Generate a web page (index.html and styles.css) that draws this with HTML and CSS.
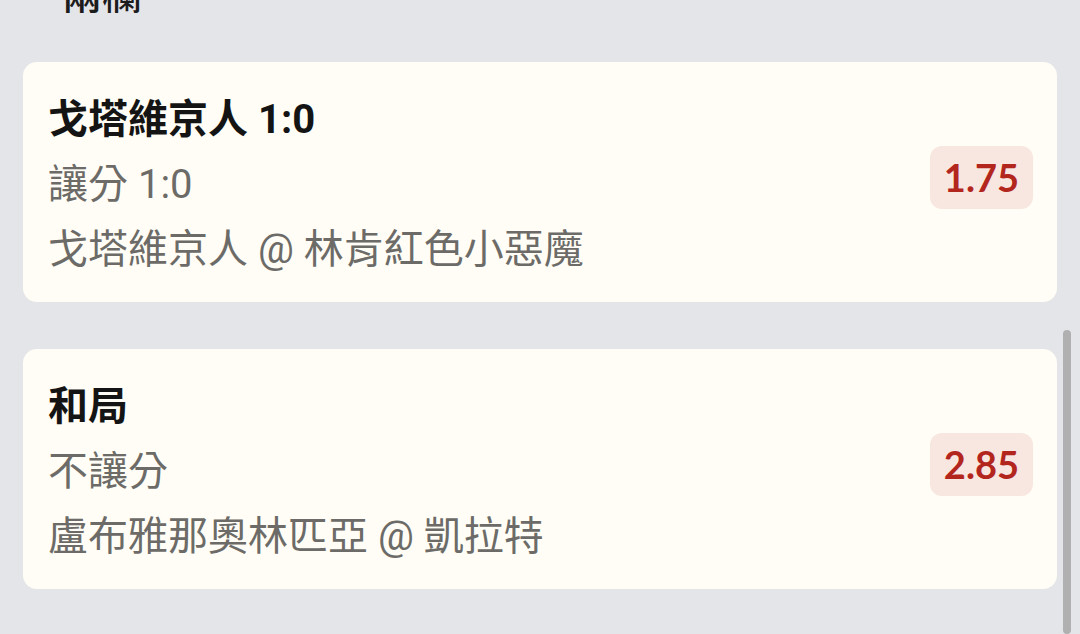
FILE: index.html
```html
<!DOCTYPE html>
<html lang="zh-Hant">
<head>
  <meta charset="UTF-8">
  <title>兩欄</title>
  <meta name="viewport" content="width=device-width, initial-scale=1">
  <link rel="stylesheet" href="styles.css">
</head>
<body>
  <div class="page">
    <h2 class="section-title">兩欄</h2>

    <div class="bet-card">
      <div class="bet-info">
        <div class="bet-pick">戈塔維京人 1:0</div>
        <div class="bet-line">讓分 1:0</div>
        <div class="bet-line">戈塔維京人 @ 林肯紅色小惡魔</div>
      </div>
      <div class="odds">1.75</div>
    </div>

    <div class="bet-card">
      <div class="bet-info">
        <div class="bet-pick">和局</div>
        <div class="bet-line">不讓分</div>
        <div class="bet-line">盧布雅那奧林匹亞 @ 凱拉特</div>
      </div>
      <div class="odds">2.85</div>
    </div>
  </div>

  <div class="scrollbar"></div>
</body>
</html>
```

FILE: styles.css
```css
:root {
  --bg-color: #e4e5e9;
  --card-color: #fffdf5;
  --text-color: #141414;
  --muted-color: #6c6b68;
  --odds-color: #b3261e;
  --odds-bg: #f8e6e0;
}
* { margin: 0; padding: 0; box-sizing: border-box; }
body {
  font-family: Roboto, "Noto Sans CJK TC", sans-serif;
  background-color: var(--bg-color);
  color: var(--text-color);
  overflow: hidden;
}
.page {
  padding: 0 23px;
}
.section-title {
  font-size: 40px;
  font-weight: 500;
  line-height: 48px;
  margin: -28px 0 42px 39px;
  color: #1c1c1c;
}
.bet-card {
  display: flex;
  align-items: center;
  justify-content: space-between;
  background: var(--card-color);
  border-radius: 14px;
  padding: 25px 24px 20px 25px;
  margin-bottom: 47px;
}
.bet-pick {
  font-size: 40px;
  font-weight: 700;
  line-height: 65px;
}
.bet-line {
  font-size: 40px;
  line-height: 65px;
  color: var(--muted-color);
}
.odds {
  height: 63px;
  line-height: 63px;
  padding: 0 14px;
  margin-bottom: 14px;
  border-radius: 12px;
  background: var(--odds-bg);
  color: var(--odds-color);
  font-family: Lato, sans-serif;
  font-size: 38px;
  font-weight: 700;
}
.scrollbar {
  position: fixed;
  right: 9px;
  top: 330px;
  bottom: 0;
  width: 8px;
  border-radius: 4px;
  background: #b0b0b1;
}
```
